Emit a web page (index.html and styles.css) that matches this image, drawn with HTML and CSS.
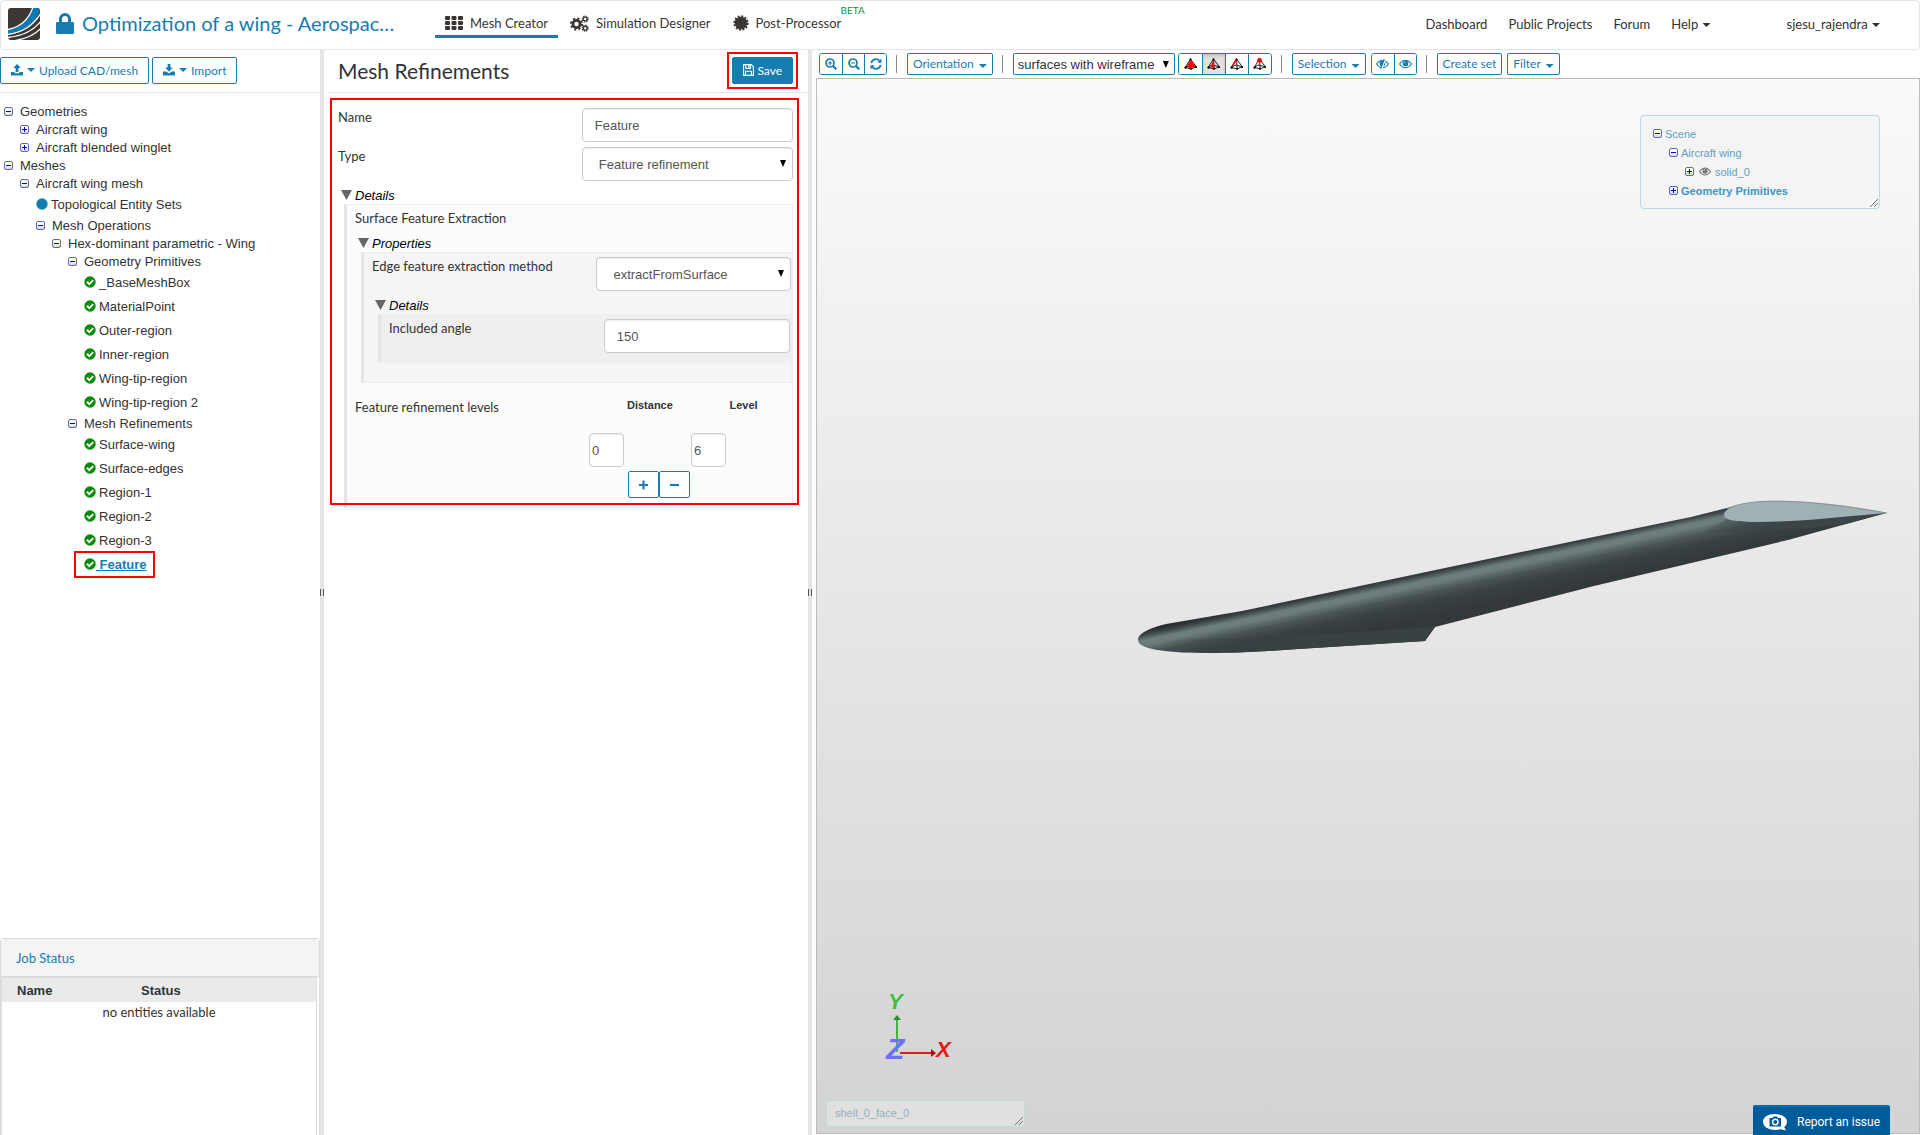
FILE: index.html
```html
<!DOCTYPE html>
<html lang="en">
<head>
  <meta charset="UTF-8">
  <meta name="viewport" content="width=device-width, initial-scale=1.0">
  <title>Mesh Creator</title>
  <link rel="stylesheet" href="styles.css">
</head>
<body>
  <!-- Icon sprite -->
  <svg class="sprite" aria-hidden="true">
    <defs>
      <linearGradient id="toggleFill" x1="0" y1="0" x2="0" y2="1">
        <stop offset="0.4" stop-color="#fff"/>
        <stop offset="1" stop-color="#cfd0dc"/>
      </linearGradient>
    </defs>
    <symbol id="i-minus" viewBox="0 0 9 9">
      <rect x="0.5" y="0.5" width="8" height="8" rx="1.5" fill="url(#toggleFill)" stroke="#5f6bb5"/>
      <path d="M2 4.5h5" stroke="#0000c8"/>
    </symbol>
    <symbol id="i-plus" viewBox="0 0 9 9">
      <rect x="0.5" y="0.5" width="8" height="8" rx="1.5" fill="url(#toggleFill)" stroke="#5f6bb5"/>
      <path d="M2 4.5h5M4.5 2v5" stroke="#0000c8"/>
    </symbol>
    <symbol id="i-check" viewBox="0 0 12 12">
      <circle cx="6" cy="6" r="5.7" fill="#0a8a0a"/>
      <path d="M2.9 5.8l2.3 2.3 4-4" fill="none" stroke="#fff" stroke-width="2"/>
    </symbol>
    <symbol id="i-dot" viewBox="0 0 12 12">
      <circle cx="6" cy="6" r="5.7" fill="#177cb0"/>
    </symbol>
    <symbol id="i-lock" viewBox="0 0 18 22">
      <path d="M1 10h2V7a6 6 0 0 1 12 0v3h2a1 1 0 0 1 1 1v10a1 1 0 0 1-1 1H1a1 1 0 0 1-1-1V11a1 1 0 0 1 1-1zM6 10h6V7a3 3 0 0 0-6 0z" fill="currentColor"/>
    </symbol>
    <symbol id="i-grid" viewBox="0 0 18 14">
      <g fill="currentColor">
        <rect width="5" height="4" rx="1"/><rect x="6.5" width="5" height="4" rx="1"/><rect x="13" width="5" height="4" rx="1"/>
        <rect y="5" width="5" height="4" rx="1"/><rect x="6.5" y="5" width="5" height="4" rx="1"/><rect x="13" y="5" width="5" height="4" rx="1"/>
        <rect y="10" width="5" height="4" rx="1"/><rect x="6.5" y="10" width="5" height="4" rx="1"/><rect x="13" y="10" width="5" height="4" rx="1"/>
      </g>
    </symbol>
    <symbol id="i-gears" viewBox="0 0 19 17">
      <g fill="none" stroke="currentColor">
        <circle cx="6.5" cy="9" r="3.6" stroke-width="2.8"/>
        <circle cx="6.5" cy="9" r="5.6" stroke-width="1.9" stroke-dasharray="2.2 2.2"/>
        <circle cx="15.2" cy="4" r="1.9" stroke-width="1.4"/>
        <circle cx="15.2" cy="4" r="3" stroke-width="1.2" stroke-dasharray="1.3 1.05"/>
        <circle cx="15.2" cy="13.2" r="1.9" stroke-width="1.4"/>
        <circle cx="15.2" cy="13.2" r="3" stroke-width="1.2" stroke-dasharray="1.3 1.05"/>
      </g>
    </symbol>
    <symbol id="i-burst" viewBox="0 0 16 16">
      <circle cx="8" cy="8" r="6.3" fill="currentColor"/>
      <circle cx="8" cy="8" r="6.8" fill="none" stroke="currentColor" stroke-width="1.8" stroke-dasharray="2 1.56"/>
    </symbol>
    <symbol id="i-upload" viewBox="0 0 12 12">
      <path d="M6 0l3.8 4H7.4v4H4.6V4H2.2zM0 8h3.6v1.2h4.8V8H12v3.5H0z" fill="currentColor"/>
    </symbol>
    <symbol id="i-download" viewBox="0 0 12 12">
      <path d="M4.6 0h2.8v3.6h2.4L6 7.8 2.2 3.6h2.4zM0 7.5h3.4L6 9.6l2.6-2.1H12v4H0z" fill="currentColor"/>
    </symbol>
    <symbol id="i-save" viewBox="0 0 11 12">
      <path d="M.6.6h7.6l2.2 2.3v8.5H.6zM2.8.6v3.8h4.6V.6M2.6 11.4V7.2h5.8v4.2" fill="none" stroke="currentColor" stroke-width="1.1"/>
      <path d="M5.2 1.2h1.4v2.4H5.2z" fill="currentColor"/>
    </symbol>
    <symbol id="i-zoomin" viewBox="0 0 12 12">
      <path d="M8 8l3.3 3.3" stroke="currentColor" stroke-width="2.2"/>
      <path d="M2.8 5h4.4M5 2.8v4.4" stroke="currentColor" stroke-width="1.1"/>
      <circle cx="5" cy="5" r="4" fill="none" stroke="currentColor" stroke-width="1.7"/>
    </symbol>
    <symbol id="i-zoomout" viewBox="0 0 12 12">
      <path d="M8 8l3.3 3.3" stroke="currentColor" stroke-width="2.2"/>
      <path d="M2.8 5h4.4" stroke="currentColor" stroke-width="1.1"/>
      <circle cx="5" cy="5" r="4" fill="none" stroke="currentColor" stroke-width="1.7"/>
    </symbol>
    <symbol id="i-refresh" viewBox="0 0 12 12">
      <path d="M1.3 5A4.7 4.7 0 0 1 9.6 3M10.7 7a4.7 4.7 0 0 1-8.3 2" fill="none" stroke="currentColor" stroke-width="1.8"/>
      <path d="M11.5.6v4.2H7.3zM.5 11.4V7.2h4.2z" fill="currentColor"/>
    </symbol>
    <symbol id="i-eye" viewBox="0 0 14 10">
      <path d="M.6 5Q3.4.9 7 .9T13.4 5Q10.6 9.1 7 9.1T.6 5z" fill="none" stroke="currentColor" stroke-width="1.2"/>
      <circle cx="7" cy="4.4" r="3.1" fill="currentColor"/>
      <path d="M5.4 4.2a1.7 1.7 0 0 1 1.6-1.6" fill="none" stroke="#fff" stroke-width=".7"/>
    </symbol>
    <symbol id="i-noeye" viewBox="0 0 14 10">
      <path d="M.6 5Q3.4.9 7 .9T13.4 5Q10.6 9.1 7 9.1T.6 5z" fill="none" stroke="currentColor" stroke-width="1.2"/>
      <circle cx="7" cy="4.4" r="3.1" fill="currentColor"/>
      <path d="M10 0L5.8 10" stroke="#fff" stroke-width="1.6"/>
      <path d="M9 0L4.8 10" stroke="currentColor" stroke-width="1.3"/>
    </symbol>
    <symbol id="i-tetra" viewBox="0 0 13 12">
      <path d="M6.5 1L1.2 9.4l6 1.6 5-2.4zM6.5 1l.7 10M1.2 9.4l4-2.4 7 1.6" fill="none" stroke="#222" stroke-width="1"/>
      <circle cx="1.6" cy="9.6" r="1.2"/><circle cx="7" cy="10.8" r="1"/><circle cx="12" cy="9" r="1.1"/><circle cx="6.5" cy="1.3" r="1"/>
    </symbol>
    <symbol id="i-grip" viewBox="0 0 8 8">
      <path d="M0 8L8 0M4 8l4-4" stroke="#777" stroke-width="1"/>
    </symbol>
  </svg>

  <header class="topbar">
    <a class="logo" href="#" aria-label="Home">
      <svg width="32" height="32" viewBox="0 0 32 32">
        <defs><clipPath id="logoClip"><rect width="32" height="32" rx="3"/></clipPath></defs>
        <g clip-path="url(#logoClip)">
          <rect width="32" height="32" fill="#3d3734"/>
          <path d="M0 22C14 19 21 12 25 0h7v3C25 18 14 24 0 26z" fill="#0c7bb3"/>
          <path d="M0 21.5C13 19 21 11 25 -1M0 26.5C15 24 25 18 33 5M0 29.5C15 28 26 22 33 13M5 33C17 31 27 27 33 20" fill="none" stroke="#fff" stroke-width="1.3"/>
        </g>
      </svg>
    </a>
    <a class="project" href="#">
      <svg width="18" height="22"><use href="#i-lock"/></svg>
      <span>Optimization of a wing - Aerospac…</span>
    </a>
    <nav class="steps">
      <a class="active" href="#"><svg width="18" height="14"><use href="#i-grid"/></svg>Mesh Creator</a>
      <a href="#"><svg width="19" height="17"><use href="#i-gears"/></svg>Simulation Designer</a>
      <a href="#"><svg width="16" height="16"><use href="#i-burst"/></svg>Post-Processor<sup>BETA</sup></a>
    </nav>
    <nav class="links">
      <a href="#">Dashboard</a>
      <a href="#">Public Projects</a>
      <a href="#">Forum</a>
      <a href="#">Help <i class="caret"></i></a>
      <a class="user" href="#">sjesu_rajendra <i class="caret"></i></a>
    </nav>
  </header>

  <main class="workspace">
    <!-- Project tree -->
    <aside class="sidebar">
      <div class="pane-head">
        <button class="btn"><svg width="12" height="12"><use href="#i-upload"/></svg><i class="caret"></i>Upload CAD/mesh</button>
        <button class="btn"><svg width="12" height="12"><use href="#i-download"/></svg><i class="caret"></i>Import</button>
      </div>
      <ul class="tree">
        <li><div class="node"><svg><use href="#i-minus"/></svg>Geometries</div>
          <ul>
            <li><div class="node"><svg><use href="#i-plus"/></svg>Aircraft wing</div></li>
            <li><div class="node"><svg><use href="#i-plus"/></svg>Aircraft blended winglet</div></li>
          </ul>
        </li>
        <li><div class="node"><svg><use href="#i-minus"/></svg>Meshes</div>
          <ul>
            <li><div class="node"><svg><use href="#i-minus"/></svg>Aircraft wing mesh</div>
              <ul>
                <li><div class="leaf"><svg><use href="#i-dot"/></svg>Topological Entity Sets</div></li>
                <li><div class="node"><svg><use href="#i-minus"/></svg>Mesh Operations</div>
                  <ul>
                    <li><div class="node"><svg><use href="#i-minus"/></svg>Hex-dominant parametric - Wing</div>
                      <ul>
                        <li><div class="node"><svg><use href="#i-minus"/></svg>Geometry Primitives</div>
                          <ul>
                            <li><div class="leaf"><svg><use href="#i-check"/></svg>_BaseMeshBox</div></li>
                            <li><div class="leaf"><svg><use href="#i-check"/></svg>MaterialPoint</div></li>
                            <li><div class="leaf"><svg><use href="#i-check"/></svg>Outer-region</div></li>
                            <li><div class="leaf"><svg><use href="#i-check"/></svg>Inner-region</div></li>
                            <li><div class="leaf"><svg><use href="#i-check"/></svg>Wing-tip-region</div></li>
                            <li><div class="leaf"><svg><use href="#i-check"/></svg>Wing-tip-region 2</div></li>
                          </ul>
                        </li>
                        <li><div class="node"><svg><use href="#i-minus"/></svg>Mesh Refinements</div>
                          <ul>
                            <li><div class="leaf"><svg><use href="#i-check"/></svg>Surface-wing</div></li>
                            <li><div class="leaf"><svg><use href="#i-check"/></svg>Surface-edges</div></li>
                            <li><div class="leaf"><svg><use href="#i-check"/></svg>Region-1</div></li>
                            <li><div class="leaf"><svg><use href="#i-check"/></svg>Region-2</div></li>
                            <li><div class="leaf"><svg><use href="#i-check"/></svg>Region-3</div></li>
                            <li><a class="leaf selected marked" href="#"><svg><use href="#i-check"/></svg>&nbsp;Feature</a></li>
                          </ul>
                        </li>
                      </ul>
                    </li>
                  </ul>
                </li>
              </ul>
            </li>
          </ul>
        </li>
      </ul>
      <section class="jobs">
        <h2>Job Status</h2>
        <div class="jobs-body">
          <table>
            <thead><tr><th>Name</th><th>Status</th></tr></thead>
            <tbody><tr><td colspan="2">no entities available</td></tr></tbody>
          </table>
        </div>
      </section>
    </aside>

    <div class="splitter"></div>

    <!-- Settings form -->
    <section class="settings">
      <div class="pane-head">
        <h1>Mesh Refinements</h1>
        <button class="btn primary marked"><svg width="11" height="12"><use href="#i-save"/></svg>Save</button>
      </div>
      <form class="form marked">
        <div class="field">
          <label for="name">Name</label>
          <input id="name" type="text" value="Feature">
        </div>
        <div class="field">
          <label for="type">Type</label>
          <div class="select"><select id="type"><option>Feature refinement</option></select></div>
        </div>
        <details open>
          <summary>Details</summary>
          <div class="group outer">
            <p>Surface Feature Extraction</p>
            <details open>
              <summary>Properties</summary>
              <div class="group middle">
                <div class="field">
                  <label for="method">Edge feature extraction method</label>
                  <div class="select"><select id="method"><option>extractFromSurface</option></select></div>
                </div>
                <details open>
                  <summary>Details</summary>
                  <div class="group inner">
                    <div class="field">
                      <label for="angle">Included angle</label>
                      <input id="angle" type="text" value="150">
                    </div>
                  </div>
                </details>
              </div>
            </details>
            <div class="levels">
              <p>Feature refinement levels</p>
              <div class="levels-grid">
                <div class="levels-head"><label for="distance">Distance</label><label for="level">Level</label></div>
                <div class="levels-row"><input id="distance" type="text" value="0"><input id="level" type="text" value="6"></div>
                <div class="levels-actions">
                  <button type="button" class="btn" aria-label="Add"><svg width="10" height="10" viewBox="0 0 10 10"><path d="M0 5h10M5 0v10" stroke="currentColor" stroke-width="2.4"/></svg></button>
                  <button type="button" class="btn" aria-label="Remove"><svg width="10" height="10" viewBox="0 0 10 10"><path d="M0 5h10" stroke="currentColor" stroke-width="2.4"/></svg></button>
                </div>
              </div>
            </div>
          </div>
        </details>
      </form>
    </section>

    <div class="splitter"></div>

    <!-- 3D viewer -->
    <section class="viewer">
      <div class="toolbar">
        <div class="btn-group">
          <button aria-label="Zoom in"><svg width="12" height="12"><use href="#i-zoomin"/></svg></button>
          <button aria-label="Zoom out"><svg width="12" height="12"><use href="#i-zoomout"/></svg></button>
          <button aria-label="Reset view"><svg width="12" height="12"><use href="#i-refresh"/></svg></button>
        </div>
        <i class="sep"></i>
        <button class="tool">Orientation <i class="caret"></i></button>
        <i class="sep"></i>
        <div class="select small"><select aria-label="Render mode"><option>surfaces with wireframe</option></select></div>
        <div class="btn-group pick">
          <button aria-label="Pick volumes"><svg width="13" height="12" viewBox="0 0 13 12"><use href="#i-tetra" width="13" height="12"/><path d="M6.5 1.5L2.5 9l4.7 1.5L11.5 8.4z" fill="red"/></svg></button>
          <button class="on" aria-label="Pick faces"><svg width="13" height="12" viewBox="0 0 13 12"><use href="#i-tetra" width="13" height="12"/><path d="M6.3 2L3.5 9l3.6 1.6z" fill="red"/></svg></button>
          <button aria-label="Pick edges"><svg width="13" height="12" viewBox="0 0 13 12"><use href="#i-tetra" width="13" height="12"/><path d="M6.3 1.5L3 7" stroke="red" stroke-width="1.5"/></svg></button>
          <button aria-label="Pick nodes"><svg width="13" height="12" viewBox="0 0 13 12"><use href="#i-tetra" width="13" height="12"/><circle cx="6.5" cy="2.4" r="2.4" fill="red"/></svg></button>
        </div>
        <i class="sep"></i>
        <button class="tool">Selection <i class="caret"></i></button>
        <div class="btn-group">
          <button aria-label="Hide"><svg width="13" height="10"><use href="#i-noeye"/></svg></button>
          <button aria-label="Show"><svg width="13" height="10"><use href="#i-eye"/></svg></button>
        </div>
        <i class="sep"></i>
        <button class="tool">Create set</button>
        <button class="tool">Filter <i class="caret"></i></button>
      </div>

      <div class="canvas">
        <svg class="model" viewBox="817 79 1102 1054" preserveAspectRatio="none">
          <defs>
            <linearGradient id="skin" gradientUnits="userSpaceOnUse" x1="1426" y1="571" x2="1442" y2="646">
              <stop offset="0" stop-color="#2b3133"/>
              <stop offset="0.04" stop-color="#394143"/>
              <stop offset="0.12" stop-color="#6d7d7d"/>
              <stop offset="0.17" stop-color="#6d7d7d"/>
              <stop offset="0.28" stop-color="#4a5557"/>
              <stop offset="0.4" stop-color="#394143"/>
              <stop offset="0.6" stop-color="#33383b"/>
              <stop offset="1" stop-color="#33383b"/>
            </linearGradient>
            <linearGradient id="belly" gradientUnits="userSpaceOnUse" x1="1160" y1="0" x2="1300" y2="0">
              <stop offset="0" stop-color="#394143" stop-opacity="0"/>
              <stop offset="1" stop-color="#394143"/>
            </linearGradient>
            <linearGradient id="root" gradientUnits="userSpaceOnUse" x1="1690" y1="0" x2="1780" y2="0">
              <stop offset="0" stop-color="#3b4446" stop-opacity="0"/>
              <stop offset="1" stop-color="#3b4446"/>
            </linearGradient>
          </defs>
          <path d="M1138 640C1138 633 1150 628 1166 624L1242 611L1426 572L1579 540L1691 517L1735 506L1760 512L1886 513L1788 540L1594 586L1435 627L1425 641L1314 648C1270 651 1240 653 1212 653C1170 653 1138 650 1138 640z" fill="url(#skin)"/>
          <path d="M1160 640Q1300 637 1435 627L1425 641L1314 648C1270 651 1240 653 1212 653Q1175 653 1160 650z" fill="url(#belly)"/>
          <path d="M1727 519L1886 513L1846 524Q1790 531 1700 533z" fill="url(#root)"/>
          <path d="M1724 515C1724 506 1748 501 1778 501C1812 501 1850 505 1887 513C1840 517 1798 522 1758 522C1736 522 1724 520 1724 515z" fill="#9fb1b5"/>
          <path d="M1727 509C1750 497 1805 499 1887 513" fill="none" stroke="#8a9396" stroke-width="1"/>
        </svg>

        <div class="scene">
          <ul class="tree">
            <li><div class="node"><svg><use href="#i-minus"/></svg>Scene</div>
              <ul>
                <li><div class="node"><svg><use href="#i-minus"/></svg>Aircraft wing</div>
                  <ul>
                    <li><div class="node"><svg><use href="#i-plus"/></svg><svg class="vis"><use href="#i-eye"/></svg>solid_0</div></li>
                  </ul>
                </li>
                <li><div class="node strong"><svg><use href="#i-plus"/></svg>Geometry Primitives</div></li>
              </ul>
            </li>
          </ul>
          <svg class="grip"><use href="#i-grip"/></svg>
        </div>

        <svg class="axes" width="72" height="88" viewBox="0 -8 72 88">
          <path d="M12 28v32" stroke="#3fb53f" stroke-width="2"/>
          <path d="M8 28l4-5 4 5z" fill="#2f8a35"/>
          <path d="M15 61h32" stroke="#e61919" stroke-width="2"/>
          <path d="M46 57l5 4-5 4z" fill="#a01010"/>
          <text x="3" y="17" fill="#3fbf3f" font-size="22">Y</text>
          <text x="51" y="65" fill="#e61919" font-size="22">X</text>
          <text x="1" y="67" fill="#7070ff" font-size="30">Z</text>
        </svg>

        <div class="picked">shell_0_face_0<svg class="grip"><use href="#i-grip"/></svg></div>

        <button class="report">
          <svg width="24" height="17" viewBox="0 0 24 17">
            <path d="M12 0c6.8 0 12 3.2 12 7.8 0 2.2-1.2 4-2.8 5.4L23 16.5l-5-1.2c-1.8.5-3.8.7-6 .7-6.8 0-12-3.4-12-8.2S5.2 0 12 0z" fill="#fff"/>
            <path d="M6.5 4h3l1-1.5h3.5l1 1.5h3v8.5h-11.5z" fill="#005c99"/>
            <circle cx="12.3" cy="8" r="2.7" fill="none" stroke="#fff" stroke-width="1.4"/>
          </svg>
          Report an issue
        </button>
      </div>
    </section>
  </main>
</body>
</html>
```

FILE: styles.css
```css
:root {
  --blue: #177cb0;
  --text: #333;
  --line: #e5e5e5;
  --mark: #f00;
  --lato: Lato, "Open Sans", sans-serif;
  --arial: "Liberation Sans", Arial, sans-serif;
}

* {
  box-sizing: border-box;
}

body {
  margin: 0;
  height: 100vh;
  display: flex;
  flex-direction: column;
  overflow: hidden;
  font-family: var(--lato);
  font-size: 13px;
  color: var(--text);
  background: #fff;
}

a {
  color: inherit;
  text-decoration: none;
}

ul {
  list-style: none;
  margin: 0;
  padding: 0;
}

h1, h2, p {
  margin: 0;
  font-weight: normal;
}

button, input, select {
  font: inherit;
  color: inherit;
}

button {
  cursor: pointer;
}

.sprite {
  position: absolute;
  width: 0;
  height: 0;
}

.caret {
  display: inline-block;
  width: 8px;
  height: 4px;
  background: currentColor;
  clip-path: polygon(0 0, 100% 0, 50% 100%);
}

/* Top bar */
.topbar {
  flex: none;
  display: flex;
  align-items: center;
  height: 50px;
  padding: 0 39px 0 7px;
  border: 1px solid var(--line);
  border-radius: 4px;
}

.logo {
  display: flex;
  margin: 0 16px 2px 0;
}

.project {
  display: flex;
  align-items: center;
  gap: 8px;
  width: 378px;
  margin: 0 1px 4px 0;
  font-size: 20px;
  color: var(--blue);
  white-space: nowrap;
}

.steps, .links {
  display: flex;
  align-items: center;
}

.steps {
  gap: 2px;
}

.steps a {
  position: relative;
  display: flex;
  align-items: center;
  gap: 7px;
  height: 26px;
  padding: 0 10px 1px;
  border-bottom: 3px solid transparent;
  color: #3b3633;
}

.steps a.active {
  border-bottom-color: var(--blue);
}

.steps sup {
  position: absolute;
  top: -7px;
  left: 118px;
  font-size: 10px;
  line-height: 10px;
  color: #1a8f1a;
}

.links {
  gap: 21px;
  margin: 0 0 2px auto;
}

.links .caret {
  margin: 0 0 2px 1px;
}

.links .user {
  margin-left: 55px;
}

/* Panes */
.workspace {
  flex: 1;
  display: flex;
  min-height: 0;
}

.splitter {
  flex: 0 0 4px;
  display: flex;
  align-items: center;
  justify-content: center;
  background: var(--line);
}

.splitter::before {
  content: '';
  width: 2px;
  height: 7px;
  border: 1px solid #555;
  border-width: 0 1px;
}

.pane-head {
  display: flex;
  align-items: center;
  gap: 3px;
  height: 43px;
  padding-bottom: 2px;
  border-bottom: 1px solid var(--line);
}

.btn {
  display: flex;
  align-items: center;
  justify-content: center;
  gap: 4px;
  height: 27px;
  padding: 0 10px;
  border: 1px solid var(--blue);
  border-radius: 2px;
  background: #fff;
  color: var(--blue);
  font-size: 12px;
}

.btn.primary {
  gap: 3px;
  background: var(--blue);
  color: #fff;
}

.marked {
  position: relative;
}

.marked::after {
  content: '';
  position: absolute;
  inset: -6px;
  border: 2px solid var(--mark);
  pointer-events: none;
}

/* Sidebar */
.sidebar {
  flex: 0 0 320px;
  display: flex;
  flex-direction: column;
}

.tree {
  font-family: var(--arial);
  font-size: 13px;
}

.sidebar > .tree {
  flex: 1;
  padding: 9px 0 0 4px;
}

.tree ul {
  padding-left: 16px;
}

.node {
  display: flex;
  align-items: center;
  gap: 7px;
  height: 18px;
}

.node svg {
  width: 9px;
  height: 9px;
}

.leaf {
  display: flex;
  align-items: center;
  gap: 3px;
  height: 24px;
}

.leaf svg {
  width: 12px;
  height: 12px;
}

.leaf.selected {
  gap: 0;
  width: fit-content;
  font-weight: bold;
  color: var(--blue);
  text-decoration: underline;
}

.leaf.marked::after {
  inset: -1px -8px -2px -10px;
}

/* Job status */
.jobs {
  flex: 0 0 197px;
  border: 1px solid #ddd;
  border-bottom: 0;
  border-radius: 4px 4px 0 0;
}

.jobs h2 {
  height: 38px;
  padding-left: 15px;
  border-bottom: 1px solid #ddd;
  background: #f4f4f4;
  font-size: 13px;
  line-height: 38px;
  color: var(--blue);
}

.jobs-body {
  height: 158px;
  margin-right: 2px;
  border: 1px solid #ddd;
  border-width: 1px 1px 0;
}

.jobs table {
  width: 100%;
  border-collapse: collapse;
}

.jobs th {
  height: 24px;
  padding: 0 0 0 15px;
  background: #eaeaea;
  font: bold 13px var(--arial);
  text-align: left;
}

.jobs th:first-child {
  width: 124px;
}

.jobs td {
  padding: 0;
  line-height: 20px;
  text-align: center;
}

/* Settings */
.settings {
  flex: 0 0 484px;
  padding-left: 4px;
}

.settings .pane-head {
  justify-content: space-between;
  padding: 0 15px 2px 10px;
}

.settings h1 {
  font-size: 21px;
}

.form {
  margin: 15px 15px 0 10px;
}

.form.marked::after {
  inset: -10px -6px 3px -8px;
}

.field {
  display: grid;
  grid-template-columns: 15fr 13fr;
  align-items: start;
  margin-bottom: 5px;
}

.field label, .form p {
  line-height: 18px;
}

.form input, .form select {
  width: 100%;
  height: 34px;
  border: 1px solid #ccc;
  border-radius: 4px;
  background: #fff;
  box-shadow: inset 0 1px 1px rgba(0, 0, 0, 0.07);
  font: 13px var(--arial);
  color: #555;
}

.form input {
  padding: 0 12px;
}

.select {
  position: relative;
}

.select select {
  appearance: none;
  padding: 0 16px;
}

.select::after {
  content: '';
  position: absolute;
  top: 13px;
  right: 7px;
  width: 6px;
  height: 7px;
  background: #000;
  clip-path: polygon(0 0, 100% 0, 50% 100%);
  pointer-events: none;
}

summary {
  display: flex;
  align-items: center;
  gap: 3px;
  height: 18px;
  padding-left: 3px;
  font: italic 13px var(--arial);
  color: #000;
  list-style: none;
}

summary::before {
  content: '';
  width: 11px;
  height: 10px;
  background: #666;
  clip-path: polygon(0 0, 100% 0, 50% 100%);
}

.group {
  margin-left: 6px;
  border: 1px solid #eee;
  border-left: 3px solid var(--line);
}

.outer {
  height: 304px;
  padding: 4px 0 0 8px;
  background: #fcfcfc;
}

.outer > p {
  margin-bottom: 7px;
}

.middle {
  height: 131px;
  padding: 4px 0 0 8px;
  background: #f5f5f5;
}

.inner {
  height: 49px;
  padding: 4px 0 0 8px;
  background: #efefef;
}

.levels {
  display: flex;
  justify-content: space-between;
  padding-top: 15px;
}

.levels-grid {
  width: 203px;
}

.levels-head {
  display: grid;
  grid-template-columns: 1fr 1fr;
  margin-bottom: 20px;
  padding-left: 38px;
  font: bold 11px/15px var(--arial);
}

.levels-head label:last-child {
  padding-left: 20px;
}

.levels-row {
  display: grid;
  grid-template-columns: 102px 102px;
}

.form .levels-row input {
  width: 35px;
  padding: 0 2px;
}

.levels-actions {
  display: flex;
  padding: 4px 0 0 39px;
}

.levels-actions .btn {
  width: 31px;
}

/* Viewer */
.viewer {
  flex: 1;
  display: flex;
  flex-direction: column;
  min-width: 0;
  padding: 3px 0 1px 4px;
}

.toolbar {
  display: flex;
  align-items: center;
  height: 25px;
  padding: 0 0 3px 3px;
}

.btn-group {
  display: flex;
  height: 22px;
  border: 1px solid var(--blue);
  border-radius: 3px;
  overflow: hidden;
}

.btn-group button {
  display: flex;
  align-items: center;
  justify-content: center;
  width: 22px;
  padding: 0;
  border: 0;
  background: #fff;
  color: var(--blue);
}

.btn-group button + button {
  border-left: 1px solid var(--blue);
}

.btn-group.pick {
  margin-left: 3px;
}

.btn-group.pick button {
  width: 23px;
}

.btn-group .on {
  background: #e0e0e0;
  box-shadow: inset 0 2px 3px rgba(0, 0, 0, 0.15);
}

.sep {
  width: 1px;
  height: 18px;
  margin: 0 10px 0 9px;
  background: #888;
}

.tool {
  height: 22px;
  padding: 0 5px;
  border: 1px solid var(--blue);
  border-radius: 2px;
  background: #fff;
  color: var(--blue);
  font-size: 12px;
  line-height: 18px;
  white-space: nowrap;
}

.tool .caret {
  margin-left: 2px;
}

.tool + .tool, .tool + .btn-group {
  margin-left: 5px;
}

.select.small select {
  display: block;
  width: 162px;
  height: 22px;
  padding: 0 4px;
  border: 1px solid var(--blue);
  border-radius: 2px;
  background: #fff;
  font: 13px var(--arial);
}

.select.small::after {
  top: 8px;
  right: 6px;
}

.canvas {
  position: relative;
  flex: 1;
  border: 1px solid #bbb;
  background: linear-gradient(#fafafa, #d3d3d3);
}

.model {
  display: block;
  width: 100%;
  height: 100%;
  position: absolute;
}

.scene {
  position: absolute;
  top: 36px;
  right: 39px;
  width: 240px;
  height: 94px;
  padding: 8px 0 0 12px;
  border: 1px solid #b5dbe6;
  border-radius: 4px;
  background: #f4f4f4;
}

.scene .tree {
  font-size: 11px;
  color: #659fbd;
}

.scene .node {
  gap: 3px;
  height: 19px;
}

.scene .node .vis {
  width: 12px;
  height: 9px;
  margin: 0 1px 0 2px;
  color: #777;
}

.scene .strong {
  font-weight: bold;
  color: #4395bf;
}

.grip {
  position: absolute;
  right: 1px;
  bottom: 1px;
  width: 8px;
  height: 8px;
}

.axes {
  position: absolute;
  left: 68px;
  bottom: 61px;
  font: italic bold 22px var(--arial);
}

.picked {
  position: absolute;
  left: 9px;
  bottom: 6px;
  width: 199px;
  height: 27px;
  padding-left: 8px;
  border: 1px solid #c5d8de;
  border-radius: 3px;
  background: #e0e0e0;
  font: 11px/25px var(--arial);
  color: #95b2be;
}

.report {
  position: absolute;
  right: 29px;
  bottom: -2px;
  display: flex;
  align-items: center;
  gap: 10px;
  height: 30px;
  padding: 2px 10px 0;
  border: 0;
  border-top: 2px solid #0a6cae;
  border-radius: 2px 2px 0 0;
  background: #005c99;
  color: #fff;
  font: 12px Roboto, sans-serif;
  white-space: nowrap;
}
```
